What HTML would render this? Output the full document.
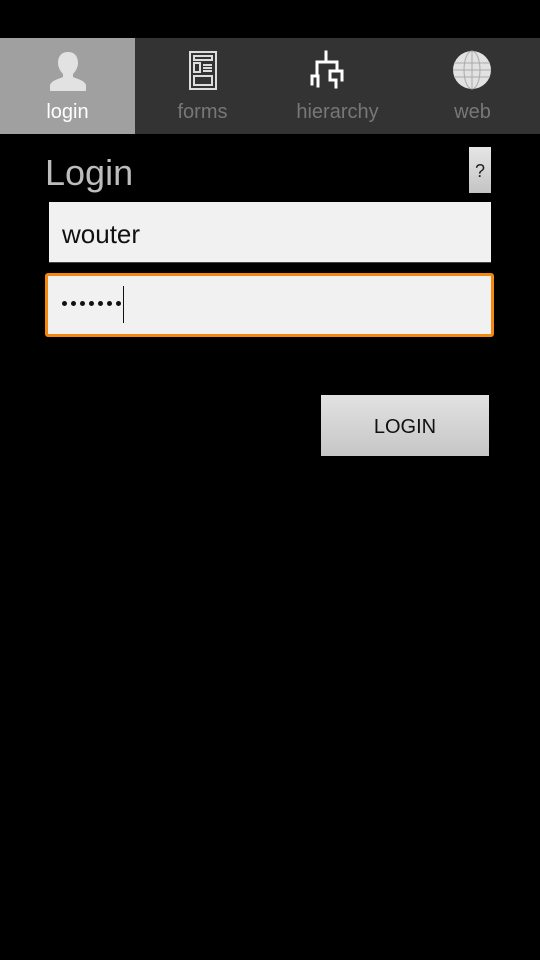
<!DOCTYPE html>
<html><head><style>
body{margin:0;width:540px;height:960px;background:#000;position:relative;overflow:hidden;font-family:"Liberation Sans",sans-serif}
.tabs{position:absolute;top:38px;left:0;width:540px;height:96px;background:#333}
.tab{position:absolute;top:0;width:135px;height:96px;text-align:center}
.tab .lbl{position:absolute;left:0;right:0;top:63px;font-size:20px;color:#777}
.tab svg.ic{position:absolute;left:47px;top:12px}
.sel{background:#a0a0a0}
.sel .lbl{color:#fff}
.dots{position:absolute;left:62px;top:301px;display:flex;gap:4px}
.dots i{display:block;width:5px;height:5px;border-radius:50%;background:#111}
</style></head><body>
<div class="tabs">
 <div class="tab sel" style="left:0">
  <svg class="ic" width="42" height="42" viewBox="0 0 42 42"><path d="M21 2c-7 0-10 5-10 11 0 5 3 9 5 11v3c-4 2-11 3-13 8v6h36v-6c-2-5-9-6-13-8v-3c2-2 5-6 5-11 0-6-3-11-10-11z" fill="#e2e2e2"/></svg>
  <div class="lbl">login</div>
 </div>
 <div class="tab" style="left:135px">
  <svg class="ic" width="42" height="42" viewBox="0 0 42 42" fill="none" stroke="#ddd" stroke-width="2"><rect x="8" y="2" width="26" height="37"/><rect x="12" y="6" width="18" height="4"/><rect x="12" y="13" width="6" height="9"/><path d="M21 15h9M21 18h9M21 21h9"/><rect x="12" y="26" width="18" height="9"/></svg>
  <div class="lbl">forms</div>
 </div>
 <div class="tab" style="left:270px">
  <svg style="position:absolute;left:0;top:0" width="135" height="96" viewBox="270 38 135 96" fill="none" stroke="#fff" stroke-width="3" stroke-linecap="square"><path d="M326 52v10M317 62h20M317 62v14M337 62v9M330 71h12M342 71v9M330 71v9M312 76h6M312 76v8M318 76v10M330 80h6M336 80v7"/></svg>
  <div class="lbl">hierarchy</div>
 </div>
 <div class="tab" style="left:405px">
  <svg class="ic" width="42" height="42" viewBox="0 0 42 42"><circle cx="20" cy="20" r="19" fill="#e2e2e2"/><g fill="none" stroke="#aaa" stroke-width="1"><ellipse cx="20" cy="20" rx="8" ry="19"/><path d="M20 1v38M2 13h36M1 20h38M2 27h36"/></g></svg>
  <div class="lbl">web</div>
 </div>
</div>
<div style="position:absolute;left:45px;top:152px;font-size:36px;color:#bdbdbd">Login</div>
<div style="position:absolute;left:469px;top:147px;width:22px;height:46px;background:linear-gradient(#e6e6e6,#c4c4c4);font-size:18px;color:#222;text-align:center;line-height:48px">?</div>
<div style="position:absolute;left:49px;top:202px;width:442px;height:61px;background:#f1f1f1;border-bottom:1px solid #444;box-sizing:border-box"></div>
<div style="position:absolute;left:62px;top:219px;font-size:26px;color:#111">wouter</div>
<div style="position:absolute;left:45px;top:273px;width:449px;height:64px;background:#f1f1f1;border:3px solid #f4880e;border-radius:3px;box-sizing:border-box"></div>
<div class="dots"><i></i><i></i><i></i><i></i><i></i><i></i><i></i></div>
<div style="position:absolute;left:123px;top:286px;width:1px;height:37px;background:#111"></div>
<div style="position:absolute;left:321px;top:395px;width:168px;height:61px;background:linear-gradient(#e2e2e2,#c6c6c6);font-size:20px;color:#111;text-align:center;line-height:64px">LOGIN</div>
</body></html>
